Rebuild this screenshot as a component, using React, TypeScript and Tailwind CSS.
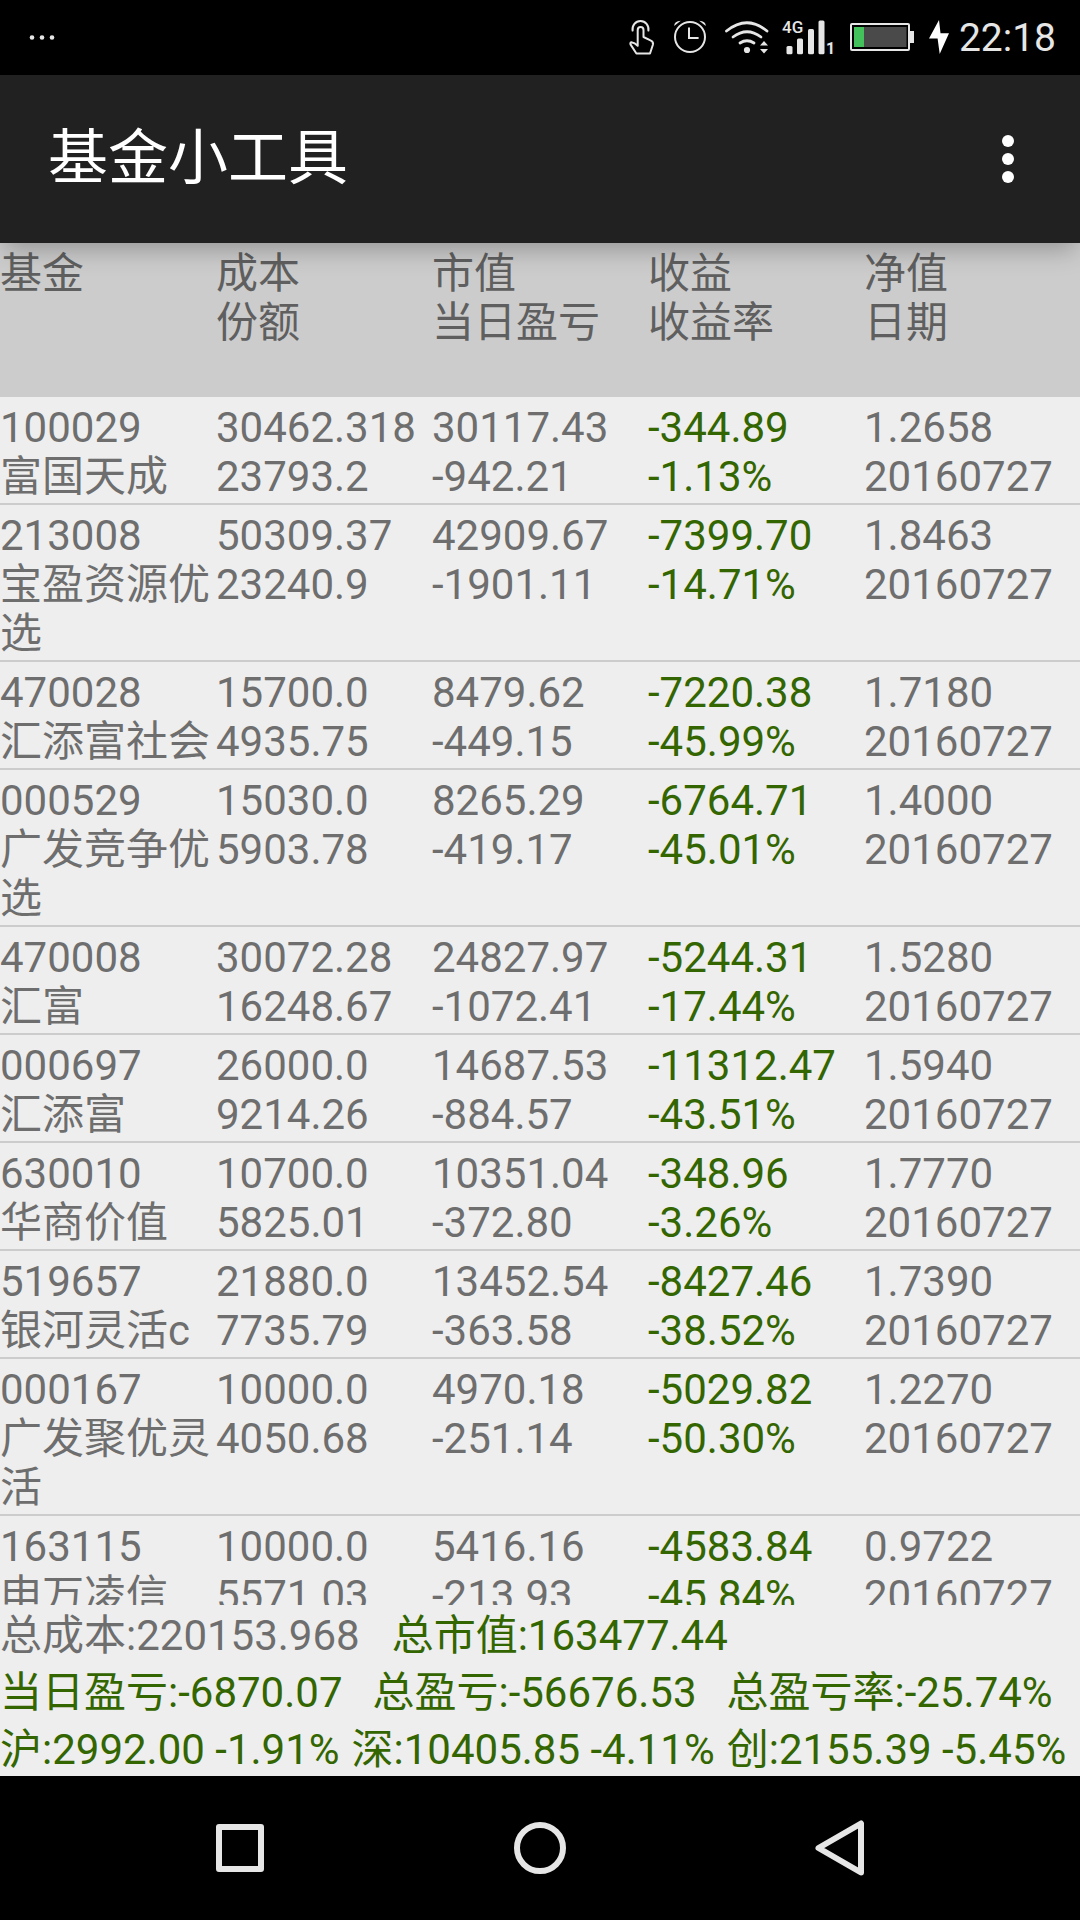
type Fund = {
  code: string;
  name: string;
  cost: string;
  shares: string;
  value: string;
  dayProfit: string;
  profit: string;
  rate: string;
  price: string;
  date: string;
};

const funds: Fund[] = [
  { code: "100029", name: "富国天成", cost: "30462.318", shares: "23793.2", value: "30117.43", dayProfit: "-942.21", profit: "-344.89", rate: "-1.13%", price: "1.2658", date: "20160727" },
  { code: "213008", name: "宝盈资源优选", cost: "50309.37", shares: "23240.9", value: "42909.67", dayProfit: "-1901.11", profit: "-7399.70", rate: "-14.71%", price: "1.8463", date: "20160727" },
  { code: "470028", name: "汇添富社会", cost: "15700.0", shares: "4935.75", value: "8479.62", dayProfit: "-449.15", profit: "-7220.38", rate: "-45.99%", price: "1.7180", date: "20160727" },
  { code: "000529", name: "广发竞争优选", cost: "15030.0", shares: "5903.78", value: "8265.29", dayProfit: "-419.17", profit: "-6764.71", rate: "-45.01%", price: "1.4000", date: "20160727" },
  { code: "470008", name: "汇富", cost: "30072.28", shares: "16248.67", value: "24827.97", dayProfit: "-1072.41", profit: "-5244.31", rate: "-17.44%", price: "1.5280", date: "20160727" },
  { code: "000697", name: "汇添富", cost: "26000.0", shares: "9214.26", value: "14687.53", dayProfit: "-884.57", profit: "-11312.47", rate: "-43.51%", price: "1.5940", date: "20160727" },
  { code: "630010", name: "华商价值", cost: "10700.0", shares: "5825.01", value: "10351.04", dayProfit: "-372.80", profit: "-348.96", rate: "-3.26%", price: "1.7770", date: "20160727" },
  { code: "519657", name: "银河灵活c", cost: "21880.0", shares: "7735.79", value: "13452.54", dayProfit: "-363.58", profit: "-8427.46", rate: "-38.52%", price: "1.7390", date: "20160727" },
  { code: "000167", name: "广发聚优灵活", cost: "10000.0", shares: "4050.68", value: "4970.18", dayProfit: "-251.14", profit: "-5029.82", rate: "-50.30%", price: "1.2270", date: "20160727" },
  { code: "163115", name: "申万凌信", cost: "10000.0", shares: "5571.03", value: "5416.16", dayProfit: "-213.93", profit: "-4583.84", rate: "-45.84%", price: "0.9722", date: "20160727" },
];

const columns = [
  ["基金", ""],
  ["成本", "份额"],
  ["市值", "当日盈亏"],
  ["收益", "收益率"],
  ["净值", "日期"],
];

const StatusBar = () => (
  <div className="flex h-[75px] shrink-0 items-center justify-between bg-black pr-6 text-[#e6e6e6]">
    <svg className="h-[75px] w-20" viewBox="0 0 80 75" fill="currentColor">
      <circle cx="32" cy="37.5" r="2.3" />
      <circle cx="42" cy="37.5" r="2.3" />
      <circle cx="52" cy="37.5" r="2.3" />
    </svg>
    <div className="flex items-center">
      {/* Touch */}
      <svg className="h-[75px] w-10" viewBox="624 0 40 75" fill="none" stroke="currentColor" strokeWidth="2" strokeLinejoin="round" strokeLinecap="round">
        <path d="M631.6 30.6a8 8.4 0 1 1 15.8 0" />
        <path d="M636.7 30a2.9 2.9 0 0 1 5.8 0v7l7 3.4q3.2 1.4 2.4 4.4l-2.9 8.7h-13.6l-5.6-8.6q-1.2-2.2.6-2.6 3.4.6 6.3 3.5z" />
      </svg>
      {/* Alarm */}
      <svg className="h-[75px] w-[50px]" viewBox="664 0 50 75" fill="none" stroke="currentColor" strokeWidth="2">
        <circle cx="689" cy="37" r="15" />
        <path d="M688 27.5V38h9.6" />
        <path d="M673.2 26q0-5 6.6-5.2zM704.8 26q0-5-6.6-5.2z" fill="currentColor" stroke="none" />
      </svg>
      {/* Wifi */}
      <svg className="h-[75px] w-[60px]" viewBox="714 0 60 75" fill="none" stroke="currentColor" strokeWidth="2.8" strokeLinecap="round">
        <path d="M725.5 31Q746 14.5 766 31" />
        <path d="M732 37q14-10.5 28 0" />
        <path d="M739 43q7-4.5 14 0" />
        <circle cx="746" cy="50" r="3.1" fill="currentColor" stroke="none" />
        <path d="M759 45.5l4-4.4 4 4.4zM759 49l4 4.4 4-4.4z" fill="currentColor" stroke="none" />
      </svg>
      {/* Signal */}
      <svg className="h-[75px] w-[66px] font-['Roboto',sans-serif] font-bold" viewBox="774 0 66 75" fill="currentColor">
        <text x="781" y="33" fontSize="17" className="font-medium">4G</text>
        <rect x="785.5" y="46" width="6" height="8.3" rx="1.5" />
        <rect x="796" y="38.5" width="6" height="15.8" rx="1.5" />
        <rect x="807" y="29" width="6" height="25.3" rx="1.5" />
        <rect x="817.5" y="20.5" width="6" height="33.8" rx="1.5" />
        <text x="825" y="54" fontSize="16">1</text>
      </svg>
      {/* Battery */}
      <svg className="h-[75px] w-20" viewBox="840 0 80 75">
        <rect x="850" y="24" width="58" height="26" rx="1" fill="none" stroke="currentColor" strokeWidth="2" />
        <rect x="853" y="27" width="52.5" height="20" fill="#4a4a4a" />
        <rect x="853" y="27" width="10" height="20" fill="#43c25b" />
        <rect x="909" y="31" width="4" height="12" fill="currentColor" />
      </svg>
      <svg className="h-[75px] w-[38px]" viewBox="920 0 38 75" fill="#fff">
        <path d="M938 20l-10 18.5h8.6L938.7 54 948 33.3h-8.5z" />
      </svg>
      <span className="pt-0.5 text-[39px] leading-[49px]">22:18</span>
    </div>
  </div>
);

const AppBar = () => (
  <header className="relative z-10 flex h-[168px] shrink-0 items-center justify-between bg-[#212121] pl-12 pr-6 text-white shadow-[0_10px_24px_-4px_rgba(0,0,0,0.28)]">
    <h1 className="text-[60px] leading-[72px]">基金小工具</h1>
    <button type="button" aria-label="更多" className="flex h-24 w-24 items-center justify-center">
      <svg className="h-12 w-3" viewBox="0 0 12 48" fill="currentColor">
        <circle cx="6" cy="6" r="6" />
        <circle cx="6" cy="24" r="6" />
        <circle cx="6" cy="42" r="6" />
      </svg>
    </button>
  </header>
);

const cell = "border-b-2 border-[#cccccc] pt-1.5 pb-0.5 align-top";

const FundTable = () => (
  <main className="min-h-0 flex-1 overflow-hidden">
    <table className="w-full table-fixed border-separate border-spacing-0 text-left">
      <thead>
        <tr className="h-[154px] bg-[#cccccc] text-[#5f5f5f]">
          {columns.map(([first, second]) => (
            <th key={first} scope="col" className="pt-1.5 align-top font-normal">
              <div>{first}</div>
              <div>{second}</div>
            </th>
          ))}
        </tr>
      </thead>
      <tbody>
        {funds.map((fund) => (
          <tr key={fund.code}>
            <td className={cell}>
              <div>{fund.code}</div>
              <div>{fund.name}</div>
            </td>
            <td className={cell}>
              <div>{fund.cost}</div>
              <div>{fund.shares}</div>
            </td>
            <td className={cell}>
              <div>{fund.value}</div>
              <div>{fund.dayProfit}</div>
            </td>
            <td className={`${cell} text-[#336600]`}>
              <div>{fund.profit}</div>
              <div>{fund.rate}</div>
            </td>
            <td className={cell}>
              <div>{fund.price}</div>
              <div>{fund.date}</div>
            </td>
          </tr>
        ))}
      </tbody>
    </table>
  </main>
);

const Summary = () => (
  <section className="shrink-0 whitespace-nowrap text-[#336600]">
    <div className="flex gap-8 pt-1.5 pb-0.5">
      <span className="text-[#6e6e6e]">总成本:220153.968</span>
      <span>总市值:163477.44</span>
    </div>
    <div className="flex gap-[30px] pt-1.5 pb-0.5">
      <span>当日盈亏:-6870.07</span>
      <span>总盈亏:-56676.53</span>
      <span>总盈亏率:-25.74%</span>
    </div>
    <div className="flex gap-3 pt-1.5 pb-0.5">
      <span>沪:2992.00 -1.91%</span>
      <span>深:10405.85 -4.11%</span>
      <span>创:2155.39 -5.45%</span>
    </div>
  </section>
);

const NavBar = () => (
  <nav className="grid h-36 shrink-0 grid-cols-3 bg-black px-[90px] text-[#e6e6e6]">
    <button type="button" aria-label="最近任务" className="flex items-center justify-center">
      <svg className="h-15 w-15" viewBox="0 0 60 60" fill="none" stroke="currentColor" strokeWidth="6" strokeLinejoin="round">
        <rect x="9" y="9" width="42" height="42" />
      </svg>
    </button>
    <button type="button" aria-label="主页" className="flex items-center justify-center">
      <svg className="h-15 w-15" viewBox="0 0 60 60" fill="none" stroke="currentColor" strokeWidth="6">
        <circle cx="30" cy="30" r="23" />
      </svg>
    </button>
    <button type="button" aria-label="返回" className="flex items-center justify-center">
      <svg className="h-15 w-15" viewBox="0 0 60 60" fill="none" stroke="currentColor" strokeWidth="6" strokeLinejoin="round">
        <path d="M51 5.5v49L8.5 30z" />
      </svg>
    </button>
  </nav>
);

const App = () => {
  return (
    <div className="flex h-screen flex-col overflow-hidden bg-[#eeeeee] font-['Roboto','Noto_Sans_CJK_SC',sans-serif] text-[42px] leading-[49px] text-[#6e6e6e]">
      <StatusBar />
      <AppBar />
      <FundTable />
      <Summary />
      <NavBar />
    </div>
  );
};

export default App;
